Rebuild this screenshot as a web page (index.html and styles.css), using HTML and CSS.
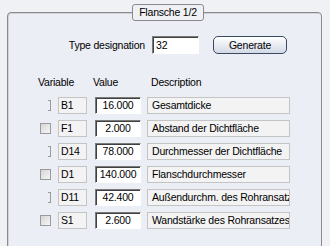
FILE: index.html
```html
<!DOCTYPE html>
<html lang="en">
<head>
    <meta charset="UTF-8">
    <title>Flansche</title>
    <link rel="stylesheet" href="styles.css">
</head>
<body>
    <div class="panel">
        <div class="legend">Flansche 1/2</div>
        <div class="type-row">
            <span class="type-label">Type designation</span>
            <span class="edit type-edit">32</span>
            <span class="btn">Generate</span>
        </div>
        <div class="head-row">
            <span class="h-var">Variable</span>
            <span class="h-val">Value</span>
            <span class="h-desc">Description</span>
        </div>
        <div class="rows">
            <div class="row">
                <span class="cell"><span class="stub"></span></span>
                <span class="var">B1</span>
                <span class="edit val">16.000</span>
                <span class="desc">Gesamtdicke</span>
            </div>
            <div class="row">
                <span class="cell"><span class="check"></span></span>
                <span class="var">F1</span>
                <span class="edit val">2.000</span>
                <span class="desc">Abstand der Dichtfläche</span>
            </div>
            <div class="row">
                <span class="cell"><span class="stub"></span></span>
                <span class="var">D14</span>
                <span class="edit val">78.000</span>
                <span class="desc">Durchmesser der Dichtfläche</span>
            </div>
            <div class="row">
                <span class="cell"><span class="check"></span></span>
                <span class="var">D1</span>
                <span class="edit val">140.000</span>
                <span class="desc">Flanschdurchmesser</span>
            </div>
            <div class="row">
                <span class="cell"><span class="stub"></span></span>
                <span class="var">D11</span>
                <span class="edit val">42.400</span>
                <span class="desc">Außendurchm. des Rohransatzes</span>
            </div>
            <div class="row">
                <span class="cell"><span class="check"></span></span>
                <span class="var">S1</span>
                <span class="edit val">2.600</span>
                <span class="desc">Wandstärke des Rohransatzes</span>
            </div>
        </div>
    </div>
</body>
</html>
```

FILE: styles.css
```css
body {
    font-family: "Liberation Sans", Arial, sans-serif;
    font-size: 10.5px;
    letter-spacing: -0.2px;
    color: #000;
    margin: 0;
    padding: 12px 0 0 7px;
    background-color: #f0f1f5;
    overflow: hidden;
}
.panel {
    position: relative;
    width: 313px;
    height: 240px;
    border: 1px solid #8a8a8a;
    border-radius: 4px;
    box-shadow: inset 1px 1px 0 #d2d3d8;
    background-color: #eceef5;
}
.legend {
    position: absolute;
    left: 124px;
    top: -9px;
    width: 70px;
    height: 15px;
    line-height: 15px;
    text-align: center;
    border: 1px solid #8a8a8a;
    border-radius: 3px;
    background-color: #f0f1f5;
}
.type-row {
    display: flex;
    align-items: center;
    margin-top: 23px;
    height: 18px;
}
.type-label {
    width: 137px;
    text-align: right;
    margin-right: 7px;
}
.edit {
    box-sizing: border-box;
    height: 18px;
    line-height: 16px;
    background-color: #fff;
    border: 1px solid #fff;
    border-top-color: #7a7a7a;
    border-left-color: #7a7a7a;
    box-shadow: inset 1px 1px 0 #404040;
}
.type-edit {
    width: 47px;
    padding-left: 3px;
    margin-right: 14px;
}
.btn {
    box-sizing: border-box;
    width: 74px;
    height: 18px;
    line-height: 16px;
    text-align: center;
    border: 1px solid #3b4a63;
    border-radius: 5px;
    background: linear-gradient(#ffffff, #e4e8f0 60%, #d3d9e6);
}
.head-row {
    display: flex;
    margin-top: 21px;
    padding-left: 30px;
    height: 14px;
    line-height: 14px;
}
.h-var {
    width: 55px;
}
.h-val {
    width: 58px;
}
.rows {
    margin-top: 8px;
}
.row {
    display: flex;
    align-items: center;
    height: 17px;
    margin-bottom: 6px;
}
.cell {
    display: flex;
    align-items: center;
    width: 18px;
    margin-left: 32px;
    height: 17px;
}
.check {
    box-sizing: border-box;
    width: 11px;
    height: 11px;
    border: 1px solid #9a9a9a;
    background: linear-gradient(135deg, #d6d6d6, #f6f6f6);
}
.stub {
    box-sizing: border-box;
    width: 3px;
    height: 11px;
    margin-left: 8px;
    border: 1px solid #9a9a9a;
    border-left: none;
}
.var {
    box-sizing: border-box;
    width: 29px;
    height: 17px;
    line-height: 15px;
    padding-left: 2px;
    margin-right: 8px;
    border: 1px solid #c4c4c4;
    background-color: #f3f3f4;
}
.val {
    width: 46px;
    height: 17px;
    line-height: 15px;
    text-align: center;
    margin-right: 6px;
}
.desc {
    box-sizing: border-box;
    width: 143px;
    height: 17px;
    line-height: 15px;
    padding-left: 4px;
    border: 1px solid #c4c4c4;
    background-color: #f3f3f4;
    white-space: nowrap;
    overflow: hidden;
}
```
